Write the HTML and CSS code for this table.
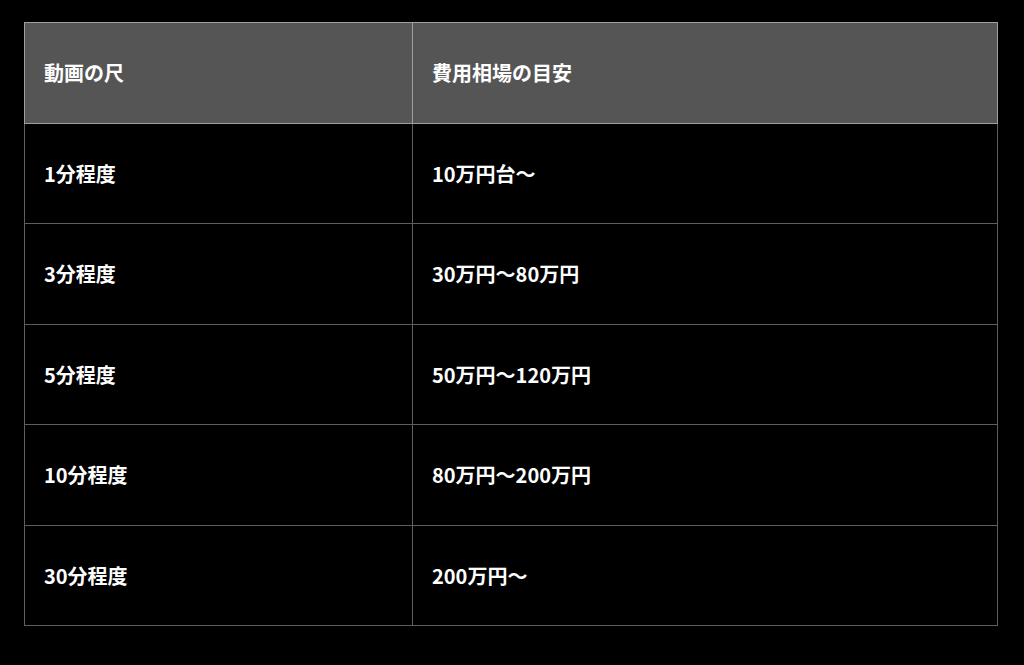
FILE: index.html
```html
<!DOCTYPE html>
<html lang="ja">
<head>
<meta charset="utf-8">
<link rel="stylesheet" href="styles.css">
</head>
<body>
<div class="wrap">
<table class="price">
<thead>
<tr><th class="c1">動画の尺</th><th>費用相場の目安</th></tr>
</thead>
<tbody>
<tr><td class="c1">1分程度</td><td>10万円台～</td></tr>
<tr><td class="c1">3分程度</td><td>30万円～80万円</td></tr>
<tr><td class="c1">5分程度</td><td>50万円～120万円</td></tr>
<tr><td class="c1">10分程度</td><td>80万円～200万円</td></tr>
<tr><td class="c1">30分程度</td><td>200万円～</td></tr>
</tbody>
</table>
</div>
</body>
</html>
```
FILE: styles.css
```css
html, body {
  margin: 0;
  padding: 0;
  background: #000;
}
.wrap {
  padding: 22px 26px 0 24px;
}
.price {
  width: 974px;
  border-collapse: collapse;
  font-family: "Noto Sans CJK JP", "Noto Sans", sans-serif;
  font-weight: 700;
  font-size: 20px;
  color: #fff;
}
.price th, .price td {
  height: 100.5px;
  padding: 0 20px 0 19px;
  text-align: left;
  vertical-align: middle;
  box-sizing: border-box;
  border: 1px solid #5e5e5e;
}
.price th {
  background: #555;
  border-color: #a0a0a0;
  font-weight: 700;
}
.price .c1 {
  width: 388px;
}
```
